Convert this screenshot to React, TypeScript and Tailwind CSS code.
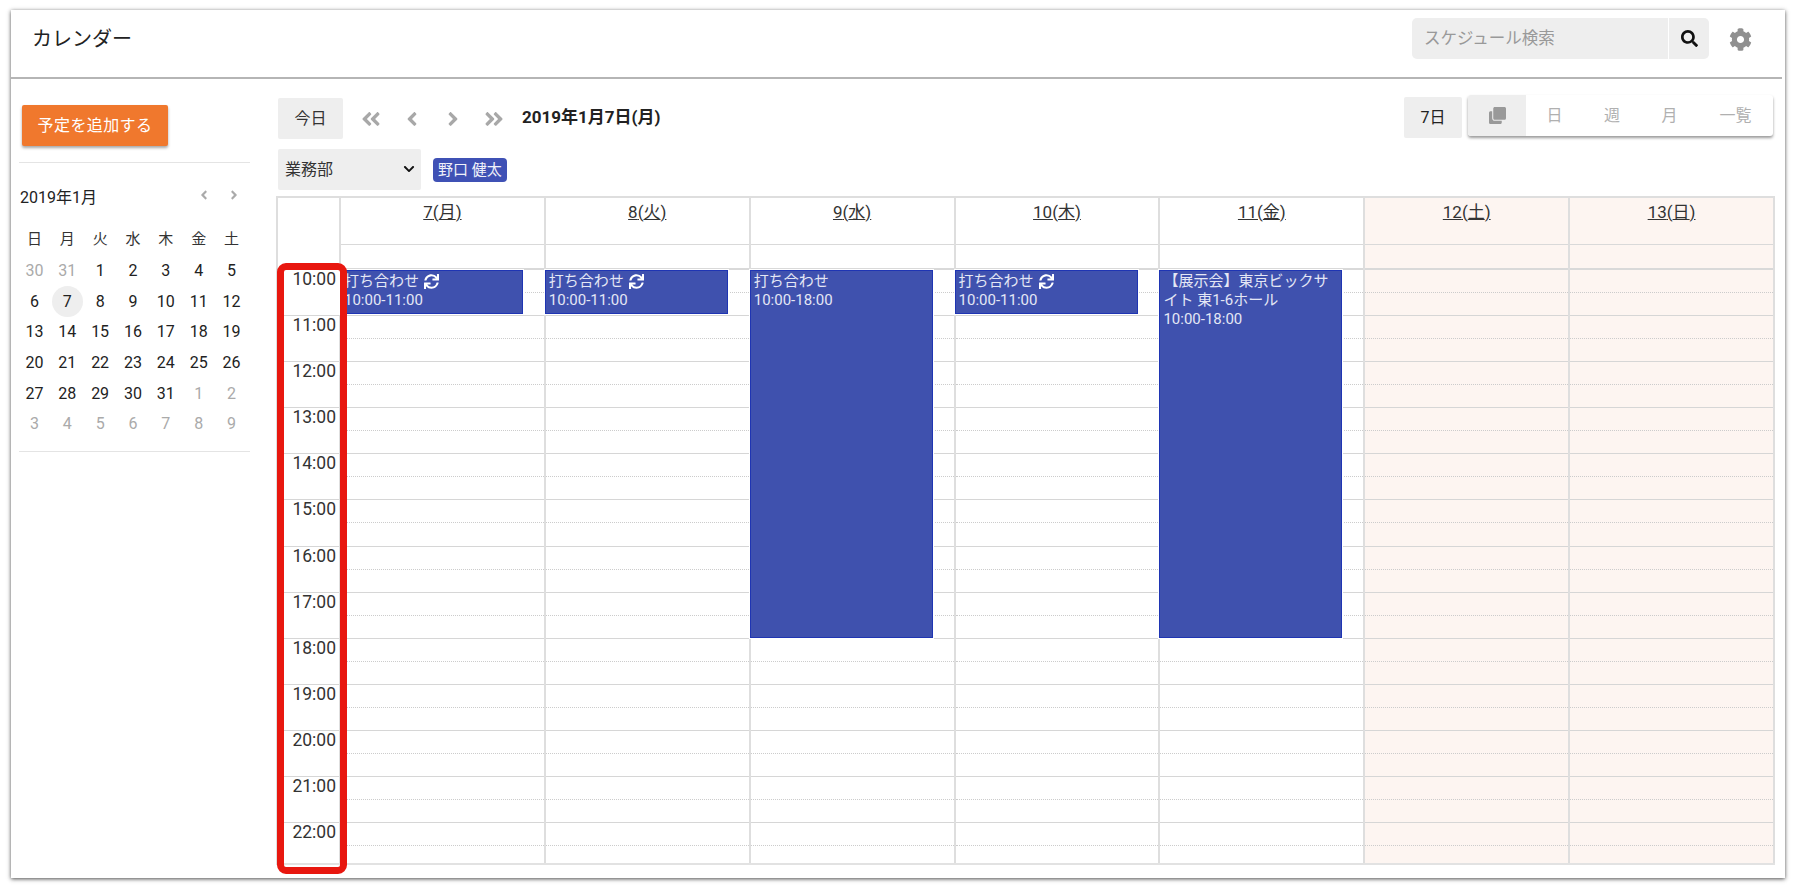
import { FaAngleDoubleLeft, FaAngleDoubleRight, FaAngleLeft, FaAngleRight, FaChevronDown, FaClone, FaCog, FaSearch, FaSync } from 'react-icons/fa'

const hours = ['10:00', '11:00', '12:00', '13:00', '14:00', '15:00', '16:00', '17:00', '18:00', '19:00', '20:00', '21:00', '22:00']

interface CalEvent {
  title: string
  time: string
  repeat?: boolean
  tall?: boolean
}

const days: { label: string; weekend?: boolean; event?: CalEvent }[] = [
  { label: '7', event: { title: '打ち合わせ', time: '10:00-11:00', repeat: true } },
  { label: '8', event: { title: '打ち合わせ', time: '10:00-11:00', repeat: true } },
  { label: '9', event: { title: '打ち合わせ', time: '10:00-18:00', tall: true } },
  { label: '10', event: { title: '打ち合わせ', time: '10:00-11:00', repeat: true } },
  { label: '11', event: { title: '【展示会】東京ビックサイト 東1-6ホール', time: '10:00-18:00', tall: true } },
  { label: '12', weekend: true },
  { label: '13', weekend: true },
]
const dayNames = ['月', '火', '水', '木', '金', '土', '日']

const weeks = [
  ['30', '31', '1', '2', '3', '4', '5'],
  ['6', '7', '8', '9', '10', '11', '12'],
  ['13', '14', '15', '16', '17', '18', '19'],
  ['20', '21', '22', '23', '24', '25', '26'],
  ['27', '28', '29', '30', '31', '1', '2'],
  ['3', '4', '5', '6', '7', '8', '9'],
]

const MiniCalendar = () => (
  <div>
    <div className="flex items-center justify-between h-[30px] mt-[20px] pl-[1px] pr-[9px]">
      <span className="text-[16px] text-[#222]">2019年1月</span>
      <div className="flex gap-[16px] text-[#aaa] -mt-[6px]">
        <FaAngleLeft size={14} />
        <FaAngleRight size={14} />
      </div>
    </div>
    <div className="grid grid-cols-7 mt-[11px] -ml-[1px] mr-[2px] text-[15px] text-[#333] text-center">
      {['日', '月', '火', '水', '木', '金', '土'].map((d) => (
        <div key={d} className="h-[31px] leading-[30px]">{d}</div>
      ))}
      {weeks.map((week, w) =>
        week.map((d, i) => {
          const muted = (w === 0 && i < 2) || (w === 4 && i > 4) || w === 5
          const today = w === 1 && i === 1
          return (
            <div key={`${w}-${i}`} className="h-[30.7px] flex items-center justify-center">
              <span className={`w-[31px] h-[31px] leading-[31px] rounded-full text-[16px] ${today ? 'bg-[#eeeeee]' : ''} ${muted ? 'text-[#aaaaaa]' : 'text-[#222]'}`}>{d}</span>
            </div>
          )
        })
      )}
    </div>
  </div>
)

const EventBox = ({ event }: { event: CalEvent }) => (
  <div className={`absolute left-[-1px] top-0 w-[183px] z-10 bg-[#3f51ae] border border-[#1f35b3] outline outline-1 outline-white text-[#e4e7f5] text-[15px] leading-[19px] pl-[3px] pr-[6px] pt-[1px] ${event.tall ? 'h-[368px]' : 'h-[44px]'}`}>
    <div>
      {event.title}
      {event.repeat && <FaSync className="inline-block ml-[5px] mb-[2px] text-white" size={15} />}
    </div>
    <div>{event.time}</div>
  </div>
)

const DayColumn = ({ day, name }: { day: (typeof days)[number]; name: string }) => (
  <div className={`relative border-r-2 border-[#dedede] ${day.weekend ? 'bg-[#fdf5f1]' : ''}`}>
    <div className="h-[47px] border-b border-[#d9d9d9] text-center text-[17px] text-[#333] pt-[2px]">
      <span className="underline">{day.label}({name})</span>
    </div>
    <div className="h-[25px] border-b-2 border-[#d9d9d9]" />
    <div className="relative">
      {day.event && <EventBox event={day.event} />}
      {hours.map((h, i) => (
        <div key={h} className={`flex flex-col ${i === 12 ? 'h-[40px]' : 'h-[46.1px] border-b border-[#d6d6d6]'}`}>
          <div className="h-[23px] border-b border-dotted border-[#cccccc]" />
        </div>
      ))}
    </div>
  </div>
)

const App = () => {
  return (
    <div className="w-[1796px] h-[892px] bg-white pt-[10px] pl-[11px] [font-family:Roboto,'Noto_Sans_CJK_JP',sans-serif] overflow-hidden">
      <div className="w-[1774px] h-[868px] bg-white shadow-[0_1px_4px_rgba(30,30,30,0.8)] flex flex-col">
        {/* Header */}
        <header className="h-[69px] shrink-0 flex items-center border-b-2 border-[#b5b5b5] mr-[3px] pl-[21px]">
          <h1 className="text-[20px] font-normal text-[#222] -mt-[10px]">カレンダー</h1>
          <div className="ml-auto flex h-[41px] w-[297px] -mt-[10px] bg-[#eeeeee] rounded-[5px]">
            <input placeholder="スケジュール検索" className="w-[257px] bg-transparent pl-[12px] pt-[2px] text-[16.5px] outline-none placeholder:text-[#999999] border-r border-white" />
            <div className="flex-1 flex items-center justify-center text-[#111]">
              <FaSearch size={17} />
            </div>
          </div>
          <div className="ml-[20px] mr-[30px] -mt-[9px] text-[#909090]">
            <FaCog size={23} />
          </div>
        </header>

        <div className="flex flex-1 min-h-0">
          {/* Sidebar */}
          <aside className="w-[264px] shrink-0 pl-[8px] pr-[25px]">
            <button className="mt-[26px] ml-[3px] w-[146px] h-[41px] bg-[#f0782d] text-white text-[16px] tracking-[0.4px] rounded-[2px] shadow-[0_2px_3px_rgba(0,0,0,0.35)]">予定を追加する</button>
            <div className="mt-[16px] border-t border-[#e4e4e4]" />
            <MiniCalendar />
            <div className="mt-[12px] border-t border-[#e4e4e4]" />
          </aside>

          {/* Main */}
          <main className="flex-1 min-w-0 pr-[12px]">
            <div className="flex items-start mt-[19px] ml-[3px] h-[41px]">
              <button className="w-[65px] h-[41px] bg-[#eeeeee] rounded-[2px] text-[16px] text-[#333]">今日</button>
              <div className="flex items-center h-[41px] text-[#a8a8a8] ml-[17px]">
                <FaAngleDoubleLeft size={22} />
                <FaAngleLeft size={22} className="ml-[19px]" />
                <FaAngleRight size={22} className="ml-[19px]" />
                <FaAngleDoubleRight size={22} className="ml-[19px]" />
              </div>
              <span className="ml-[17px] mt-[9px] font-bold text-[17px] text-[#222] leading-[20px]">2019年1月7日(月)</span>
              <div className="ml-auto flex items-start -mt-[3px]">
                <div className="w-[58px] h-[41px] mt-[2px] bg-[#eeeeee] rounded-[2px] text-[16px] text-[#222] flex items-center justify-center">7日</div>
                <div className="ml-[6px] flex h-[41px] rounded-[3px] shadow-[0_2px_3px_rgba(0,0,0,0.4)] text-[16px] text-[#b0b0b0] overflow-hidden">
                  <div className="w-[58px] bg-[#eeeeee] flex items-center justify-center text-[#999999]"><FaClone size={17} /></div>
                  <div className="w-[57px] flex items-center justify-center">日</div>
                  <div className="w-[58px] flex items-center justify-center">週</div>
                  <div className="w-[57px] flex items-center justify-center">月</div>
                  <div className="w-[75px] flex items-center justify-center">一覧</div>
                </div>
              </div>
            </div>

            <div className="flex items-center mt-[10px] ml-[3px] h-[41px]">
              <div className="relative">
                <select className="w-[143px] h-[41px] bg-[#eeeeee] rounded-[2px] pl-[7px] text-[16px] text-[#333] appearance-none outline-none">
                  <option>業務部</option>
                </select>
                <FaChevronDown size={12} className="absolute right-[6px] top-[14px] text-[#111] pointer-events-none" />
              </div>
              <span className="ml-[12px] h-[24px] leading-[24px] px-[5px] bg-[#3f51b5] text-[#f0f1fa] text-[15px] rounded-[4px]">野口 健太</span>
            </div>

            {/* Week grid */}
            <div className="relative mt-[6px] ml-[1px] grid grid-cols-[63px_repeat(7,minmax(0,1fr))] w-[1499px] border-t-2 border-l-2 border-[#dedede] border-b-2 border-b-[#e2e2e2]">
              <div className="border-r-2 border-[#dedede]">
                <div className="h-[72px]" />
                {hours.map((h, i) => (
                  <div key={h} className={`text-right pr-[3px] text-[17.5px] text-[#333] leading-[19px] ${i === 12 ? 'h-[40px]' : 'h-[46.1px] border-b border-[#d6d6d6]'}`}>{h}</div>
                ))}
              </div>
              {days.map((d, i) => (
                <DayColumn key={d.label} day={d} name={dayNames[i]} />
              ))}
              {/* annotation frame */}
              <div className="absolute left-[-1px] top-[65px] bottom-[-11px] w-[70px] border-[7px] border-[#e8170f] rounded-[9px] z-20 pointer-events-none" />
            </div>
          </main>
        </div>
      </div>
    </div>
  )
}

export default App
